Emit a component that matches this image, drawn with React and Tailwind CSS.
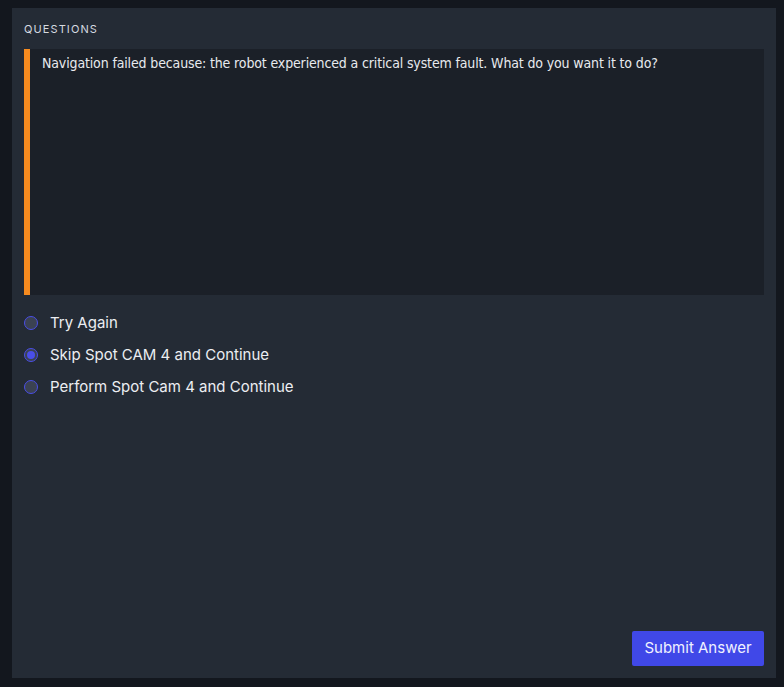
import React, { useState } from 'react';

const options = [
    'Try Again',
    'Skip Spot CAM 4 and Continue',
    'Perform Spot Cam 4 and Continue',
];

export default function App() {
    const [choice, setChoice] = useState(1);

    return (
        <div className="h-[687px] w-[784px] bg-[#13171e] pt-2 pl-3 pr-2 pb-[9px] font-['Inter',sans-serif]">
            <div className="flex h-full flex-col bg-[#242b35] px-3 pb-3">
                <div className="pt-[15px] pb-[13px] text-[11px] leading-[13px] tracking-[0.1em] text-[#d6dae0]">QUESTIONS</div>

                {/* question prompt */}
                <div className="flex h-[246px] bg-[#1b2028]">
                    <div className="w-[6px] bg-[#f68b1f]" />
                    <p className="pl-3 pt-[6px] text-[14px] leading-[17px] text-[#e8eaee] font-['DejaVu_Sans_Condensed','Liberation_Sans',sans-serif] tracking-[-0.01em]">
                        Navigation failed because: the robot experienced a critical system fault. What do you want it to do?
                    </p>
                </div>

                <div className="mt-[19px] flex flex-col gap-[14px]">
                    {options.map((label, i) => (
                        <label key={label} className="flex cursor-pointer items-center gap-3" onClick={() => setChoice(i)}>
                            <span className="flex h-[14px] w-[14px] items-center justify-center rounded-full border border-[#4a4ee8] bg-[#3b4252]">
                                {choice === i && <span className="h-[8px] w-[8px] rounded-full bg-[#4a4ee8]" />}
                            </span>
                            <span className="text-[15px] leading-[18px] text-[#eceef2]">{label}</span>
                        </label>
                    ))}
                </div>

                <div className="mt-auto flex justify-end">
                    <button className="h-[35px] w-[132px] rounded-[2px] bg-[#4048e8] text-[15px] text-[#f0f1ff]">Submit Answer</button>
                </div>
            </div>
        </div>
    );
}
